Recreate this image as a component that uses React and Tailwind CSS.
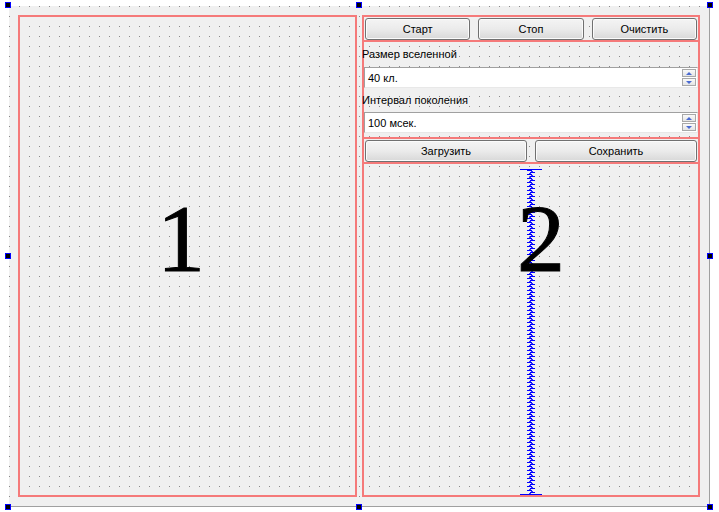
import React from 'react';

const RED = 'border-[#f57a7a]';

const Handle = ({ className }) => (
  <div className={`absolute w-[6px] h-[6px] bg-black border border-[#0000ff] ${className}`} />
);

const Button = ({ children }) => (
  <div className="flex-1 h-[22px] rounded-[3px] border border-[#707070] bg-linear-to-b from-[#f4f4f4] via-[#ebebeb] to-[#d8d8d8] shadow-[inset_0_0_0_1px_#fbfbfb] flex items-center justify-center pt-px text-[11px] text-black">
    {children}
  </div>
);

const SpinBox = ({ value }) => (
  <div className="h-[21px] bg-white border-t border-l border-[#a0a0a0] border-r border-b border-r-[#e8e8e8] border-b-[#e8e8e8] flex items-center justify-between pl-[3px] pr-[1px]">
    <span className="text-[11px] text-black pt-px">{value}</span>
    <div className="flex flex-col gap-px">
      {['up', 'down'].map((d) => (
        <div
          key={d}
          className="w-[14px] h-[8px] border border-[#a8a8a8] bg-linear-to-b from-[#fafafa] to-[#e4e4e4] flex items-center justify-center"
        >
          <svg width="6" height="3" viewBox="0 0 6 3">
            {d === 'up' ? (
              <path d="M0 3 L3 0 L6 3 Z" fill="#4a6ad2" />
            ) : (
              <path d="M0 0 L3 3 L6 0 Z" fill="#4a6ad2" />
            )}
          </svg>
        </div>
      ))}
    </div>
  </div>
);

// vertical spacer spring, as Qt Designer draws it
const coil = Array.from({ length: 180 }, (_, i) => i);

const Spacer = () => (
  <div className="flex-1 flex justify-center pt-[5px] min-h-0">
    <svg width="22" className="h-full block" shapeRendering="crispEdges">
      {coil.map((i) => (
        <g key={i}>
          <rect x={i % 2 ? 10 : 7} y={1 + i * 2} width="5" height="1" fill="#0000ff" />
          <rect x={i % 2 ? 9 : 11} y={2 + i * 2} width="2" height="1" fill="#3030ff" />
        </g>
      ))}
      <rect x="0" y="0" width="22" height="1" fill="#0000ff" />
      <rect x="0" y="100%" width="22" height="1" fill="#0000ff" transform="translate(0,-1)" />
    </svg>
  </div>
);

export default function App() {
  return (
    <div className="relative w-[719px] h-[512px] bg-white overflow-hidden font-['Liberation_Sans',Arial,sans-serif]">
      <div className="pl-[9px] pt-[6px]">
        <div className="w-[701px] h-[501px] bg-[#f0f0f0] border-r border-b border-[#a0a0a0] bg-[radial-gradient(circle_at_0.5px_0.5px,#8a8a8a_0.7px,transparent_0.9px)] bg-[length:10px_10px] p-[9px] flex gap-[5px]">
          {/* left container */}
          <div className={`w-[339px] h-full border-2 ${RED}`} />

          {/* right vertical layout */}
          <div className={`flex-1 h-full border-2 ${RED} flex flex-col`}>
            <div className={`flex gap-2 px-px pt-px border-b-2 ${RED}`}>
              <Button>Старт</Button>
              <Button>Стоп</Button>
              <Button>Очистить</Button>
            </div>

            <div className="-ml-[2px] mt-[6px] h-[13px] leading-[13px] text-[11px] text-black">
              Размер вселенной
            </div>
            <div className="mt-[6px]">
              <SpinBox value="40 кл." />
            </div>

            <div className="-ml-[2px] mt-[6px] h-[13px] leading-[13px] text-[11px] text-black">
              Интервал поколения
            </div>
            <div className="mt-[5px]">
              <SpinBox value="100 мсек." />
            </div>

            <div className={`mt-[4px] flex gap-2 px-px pt-px border-t-2 border-b-2 ${RED}`}>
              <Button>Загрузить</Button>
              <Button>Сохранить</Button>
            </div>

            <Spacer />
          </div>
        </div>
      </div>

      {/* annotation numbers */}
      <div className="absolute left-[157px] top-[191px] text-[96px] leading-[96px] text-black font-['Liberation_Serif','Times_New_Roman',serif] [-webkit-text-stroke:1px_black]">
        1
      </div>
      <div className="absolute left-[517px] top-[191px] text-[96px] leading-[96px] text-black font-['Liberation_Serif','Times_New_Roman',serif] [-webkit-text-stroke:1px_black]">
        2
      </div>

      {/* selection handles */}
      <Handle className="left-[5px] top-[2px]" />
      <Handle className="left-[356px] top-[2px]" />
      <Handle className="left-[707px] top-[2px]" />
      <Handle className="left-[5px] top-[253px]" />
      <Handle className="left-[707px] top-[253px]" />
      <Handle className="left-[5px] top-[504px]" />
      <Handle className="left-[356px] top-[504px]" />
      <Handle className="left-[707px] top-[504px]" />
    </div>
  );
}
